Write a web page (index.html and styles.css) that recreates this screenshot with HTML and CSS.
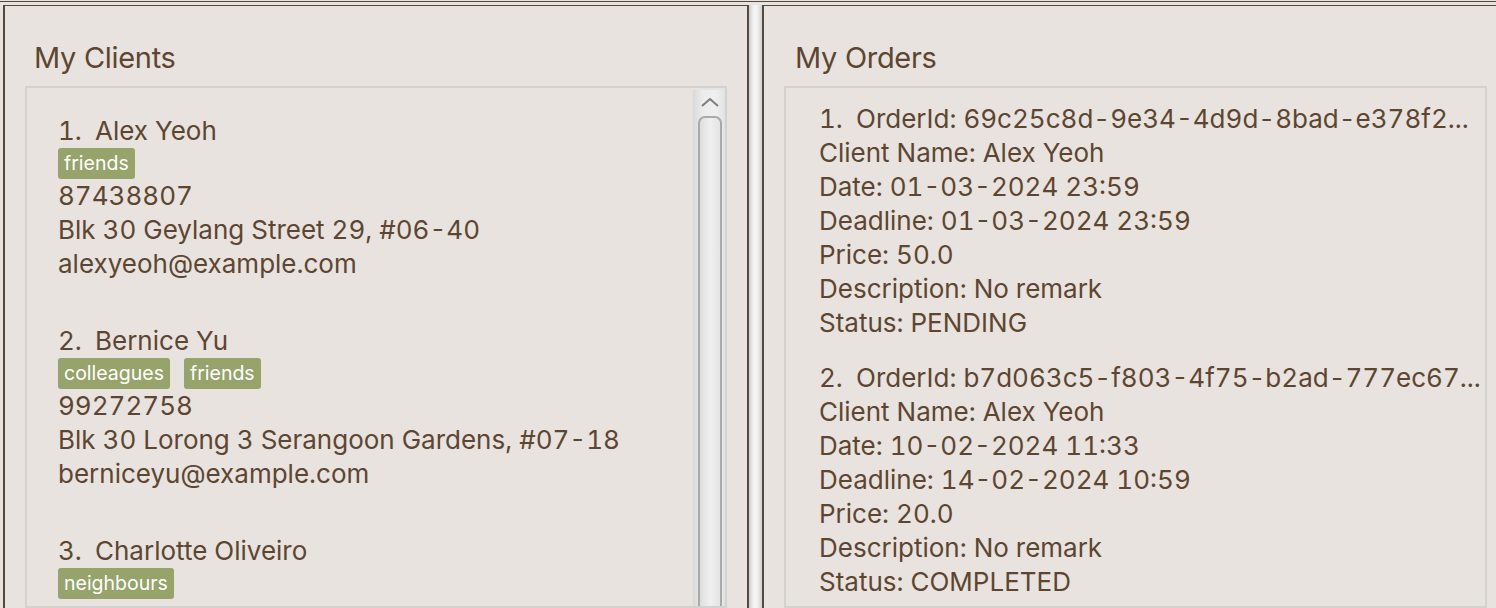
FILE: index.html
```html
<!DOCTYPE html>
<html>
<head>
<meta charset="utf-8">
<link rel="stylesheet" href="styles.css">
</head>
<body>
<div class="app">
  <section class="panel panel-left">
    <h2 class="panel-title">My Clients</h2>
    <div class="list-box">
      <div class="list">
        <div class="client">
          <div class="line"><span class="idx">1.</span>Alex Yeoh</div>
          <div class="tags"><span class="tag">friends</span></div>
          <div class="line">87438807</div>
          <div class="line">Blk 30 Geylang Street 29, #06-40</div>
          <div class="line">alexyeoh@example.com</div>
        </div>
        <div class="client">
          <div class="line"><span class="idx">2.</span>Bernice Yu</div>
          <div class="tags"><span class="tag">colleagues</span><span class="tag">friends</span></div>
          <div class="line">99272758</div>
          <div class="line">Blk 30 Lorong 3 Serangoon Gardens, #07-18</div>
          <div class="line">berniceyu@example.com</div>
        </div>
        <div class="client">
          <div class="line"><span class="idx">3.</span>Charlotte Oliveiro</div>
          <div class="tags"><span class="tag">neighbours</span></div>
          <div class="line">93210283</div>
          <div class="line">Blk 11 Ang Mo Kio Street 74, #11-04</div>
          <div class="line">charlotte@example.com</div>
        </div>
      </div>
      <div class="scrollbar">
        <div class="arrow-up">
          <svg width="20" height="12" viewBox="0 0 20 12"><path d="M2 10 L10 3 L18 10" fill="none" stroke="#7d7d7d" stroke-width="2"/></svg>
        </div>
        <div class="thumb"></div>
      </div>
    </div>
  </section>
  <div class="splitter"></div>
  <section class="panel panel-right">
    <h2 class="panel-title">My Orders</h2>
    <div class="list-box">
      <div class="list">
        <div class="order">
          <div class="line"><span class="idx">1.</span>OrderId: 69c25c8d-9e34-4d9d-8bad-e378f2...</div>
          <div class="line">Client Name: Alex Yeoh</div>
          <div class="line">Date: 01-03-2024 23:59</div>
          <div class="line">Deadline: 01-03-2024 23:59</div>
          <div class="line">Price: 50.0</div>
          <div class="line">Description: No remark</div>
          <div class="line">Status: PENDING</div>
        </div>
        <div class="order">
          <div class="line"><span class="idx">2.</span>OrderId: b7d063c5-f803-4f75-b2ad-777ec67...</div>
          <div class="line">Client Name: Alex Yeoh</div>
          <div class="line">Date: 10-02-2024 11:33</div>
          <div class="line">Deadline: 14-02-2024 10:59</div>
          <div class="line">Price: 20.0</div>
          <div class="line">Description: No remark</div>
          <div class="line">Status: COMPLETED</div>
        </div>
      </div>
    </div>
  </section>
</div>
</body>
</html>
```

FILE: styles.css
```css
html, body {
  margin: 0;
  padding: 0;
  height: 100%;
  overflow: hidden;
  background: #e8e3de;
}
body {
  font-family: Inter, "Open Sans", "Liberation Sans", sans-serif;
  color: #5d4631;
}
.app {
  margin-top: 1px;
  border-top: 1px solid #55483e;
  padding-top: 3px;
  display: flex;
  height: 603px;
}
.panel {
  flex: none;
  box-sizing: border-box;
  border-top: 1px solid #55483e;
  border-left: 2px solid #55483e;
  padding: 0 20px;
  display: flex;
  flex-direction: column;
  min-width: 0;
}
.panel-left {
  margin-left: 3px;
  width: 746px;
  border-right: 2px solid #55483e;
}
.panel-right {
  width: 745px;
}
.splitter {
  flex: none;
  width: 13px;
  background: linear-gradient(to right, #cfcfcf 0%, #f2f2f2 35%, #f4f4f4 60%, #d2d2d2 100%);
}
.panel-title {
  margin: 0;
  font-weight: 400;
  font-size: 29px;
  line-height: 36px;
  padding: 34px 0 0 9px;
  height: 46px;
  letter-spacing: -0.3px;
}
.panel-right .panel-title {
  padding-left: 11px;
}
.list-box {
  flex: 1;
  border: 2px solid #d4d2cf;
  display: flex;
  min-height: 0;
  overflow: hidden;
}
.list {
  flex: 1;
  min-width: 0;
}
.line {
  font-size: 26px;
  line-height: 34px;
  white-space: nowrap;
  overflow: hidden;
  letter-spacing: 0;
  font-variant-numeric: tabular-nums;
}
.idx {
  display: inline-block;
  width: 37px;
}
.client {
  padding: 26px 0 17px 31px;
}
.tags {
  display: flex;
  gap: 14px;
  height: 31px;
}
.tag {
  background: #96a36a;
  color: #ffffff;
  font-size: 19.5px;
  line-height: 31px;
  padding: 0 6px;
  border-radius: 3px;
}
.order {
  padding: 14px 0 7px 33px;
}
.scrollbar {
  flex: none;
  width: 31px;
  margin-top: 2px;
  background: linear-gradient(to right, #dcdcdc 0%, #ececec 30%, #efefef 70%, #e2e2e2 100%);
  border-left: 1px solid #d9d9d9;
  display: flex;
  flex-direction: column;
  align-items: center;
}
.arrow-up {
  height: 24px;
  display: flex;
  align-items: center;
  justify-content: center;
}
.thumb {
  margin-top: 2px;
  width: 20px;
  flex: 1;
  border: 2px solid #a9a9a9;
  border-bottom: none;
  border-radius: 7px 7px 0 0;
  background: linear-gradient(to right, #dedede 0%, #f0f0f0 50%, #e4e4e4 100%);
}
```
